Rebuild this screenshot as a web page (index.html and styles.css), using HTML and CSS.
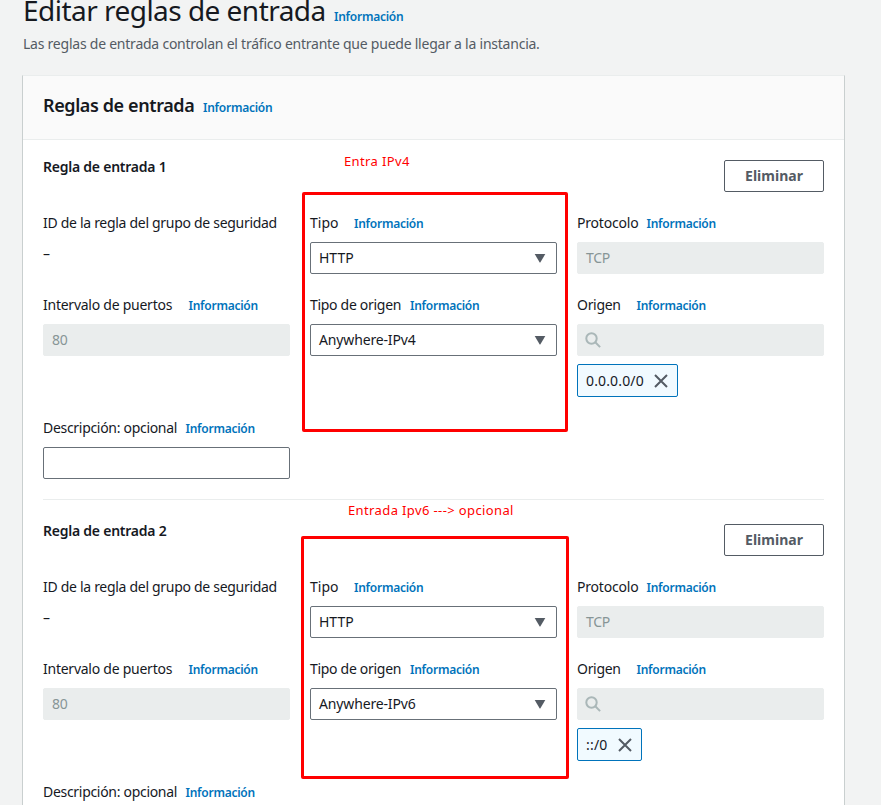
FILE: index.html
```html
<!DOCTYPE html>
<html lang="es">
<head>
<meta charset="utf-8">
<title>Editar reglas de entrada</title>
<link rel="stylesheet" href="styles.css">
</head>
<body>
<header class="page-header">
  <h1><span class="page-title">Editar reglas de entrada</span><a class="info">Información</a></h1>
  <p>Las reglas de entrada controlan el tráfico entrante que puede llegar a la instancia.</p>
</header>
<main class="panel">
  <div class="panel-header"><h2>Reglas de entrada</h2><a class="info">Información</a></div>
  <section class="rule">
    <div class="rule-header"><h3>Regla de entrada 1</h3><button class="remove">Eliminar</button></div>
    <div class="fields">
      <div class="field"><div class="label"><span class="t-id">ID de la regla del grupo de seguridad</span></div><div class="value">–</div></div>
      <div class="field"><div class="label"><span class="t-type">Tipo</span><a class="info">Información</a></div><div class="control select"><span class="t-http">HTTP</span><svg class="caret" viewBox="0 0 12 9"><path d="M.7 0h10.6L6.3 8.6h-.6z"/></svg></div></div>
      <div class="field"><div class="label"><span class="t-protocol">Protocolo</span><a class="info">Información</a></div><div class="control disabled"><span class="t-tcp">TCP</span></div></div>
      <div class="field"><div class="label"><span class="t-range">Intervalo de puertos</span><a class="info">Información</a></div><div class="control disabled">80</div></div>
      <div class="field"><div class="label"><span class="t-source-type">Tipo de origen</span><a class="info">Información</a></div><div class="control select"><span class="t-any">Anywhere-IPv4</span><svg class="caret" viewBox="0 0 12 9"><path d="M.7 0h10.6L6.3 8.6h-.6z"/></svg></div></div>
      <div class="field"><div class="label"><span class="t-source">Origen</span><a class="info">Información</a></div><div class="control disabled"><svg class="search" viewBox="0 0 16 16"><circle cx="6.5" cy="6.5" r="5.2"/><path d="M10.3 10.3l4.8 4.8"/></svg></div><div class="token"><span class="t-cidr4">0.0.0.0/0</span><svg class="close" viewBox="0 0 14 14"><path d="M1 1l12 12M13 1L1 13"/></svg></div></div>
      <div class="field"><div class="label"><span class="t-desc">Descripción: opcional</span><a class="info">Información</a></div><div class="control"></div></div>
    </div>
    <div class="note note-v4">Entra IPv4</div>
    <div class="mark mark-v4"></div>
  </section>
  <section class="rule">
    <div class="rule-header"><h3>Regla de entrada 2</h3><button class="remove">Eliminar</button></div>
    <div class="fields">
      <div class="field"><div class="label"><span class="t-id">ID de la regla del grupo de seguridad</span></div><div class="value">–</div></div>
      <div class="field"><div class="label"><span class="t-type">Tipo</span><a class="info">Información</a></div><div class="control select"><span class="t-http">HTTP</span><svg class="caret" viewBox="0 0 12 9"><path d="M.7 0h10.6L6.3 8.6h-.6z"/></svg></div></div>
      <div class="field"><div class="label"><span class="t-protocol">Protocolo</span><a class="info">Información</a></div><div class="control disabled"><span class="t-tcp">TCP</span></div></div>
      <div class="field"><div class="label"><span class="t-range">Intervalo de puertos</span><a class="info">Información</a></div><div class="control disabled">80</div></div>
      <div class="field"><div class="label"><span class="t-source-type">Tipo de origen</span><a class="info">Información</a></div><div class="control select"><span class="t-any">Anywhere-IPv6</span><svg class="caret" viewBox="0 0 12 9"><path d="M.7 0h10.6L6.3 8.6h-.6z"/></svg></div></div>
      <div class="field"><div class="label"><span class="t-source">Origen</span><a class="info">Información</a></div><div class="control disabled"><svg class="search" viewBox="0 0 16 16"><circle cx="6.5" cy="6.5" r="5.2"/><path d="M10.3 10.3l4.8 4.8"/></svg></div><div class="token"><span class="t-cidr6">::/0</span><svg class="close" viewBox="0 0 14 14"><path d="M1 1l12 12M13 1L1 13"/></svg></div></div>
      <div class="field"><div class="label"><span class="t-desc">Descripción: opcional</span><a class="info">Información</a></div></div>
    </div>
    <div class="note note-v6">Entrada Ipv6 ---&gt; opcional</div>
    <div class="mark mark-v6"></div>
  </section>
</main>
</body>
</html>
```
FILE: styles.css
```css
* { box-sizing: border-box; }
html { height: 805px; overflow: hidden; }
body {
  margin: 0;
  height: 805px;
  overflow: hidden;
  background: #f2f3f3;
  color: #16191f;
  font: 14px/22px "Noto Sans", "Open Sans", sans-serif;
  letter-spacing: -0.3px;
  white-space: nowrap;
}
h1, h2, h3, p { margin: 0; }
.page-header { display: flow-root; height: 75px; padding: 0 23px; }
h1 { display: flex; align-items: baseline; height: 33px; font-size: 28px; line-height: 32px; font-weight: 400; margin-top: -6px; }
.page-title { width: 311px; letter-spacing: -0.53px; }
.page-header p { margin-top: 6px; color: #545b64; letter-spacing: -0.235px; }
.info { color: #0073bb; font-size: 12px; font-weight: 600; line-height: 22px; letter-spacing: -0.25px; }
.panel {
  width: 823px;
  height: 730px;
  margin-left: 22px;
  background: #fff;
  border: 1px solid #c9cfcf;
  border-top-color: #eaeded;
  border-bottom: 0;
}
.panel-header {
  display: flex;
  align-items: baseline;
  height: 64px;
  padding: 18px 20px 0;
  background: #fafafa;
  border-bottom: 1px solid #eaeded;
}
h2 { width: 160px; font-size: 18px; line-height: 22px; font-weight: 600; letter-spacing: -0.4px; }
.rule { position: relative; margin: 0 20px; padding-top: 20px; height: 360px; border-bottom: 1px solid #eaeded; }
.rule + .rule { padding-top: 24px; height: 305px; border: 0; }
.rule-header { display: flex; justify-content: space-between; height: 52px; }
h3 { margin-top: -4px; font-size: 14px; line-height: 22px; font-weight: 600; letter-spacing: -0.24px; }
.remove {
  width: 100px;
  height: 32px;
  padding: 0;
  border: 1px solid #545b64;
  border-radius: 2px;
  background: #fff;
  color: #545b64;
  font: 700 14px/20px "Noto Sans", sans-serif;
}
.fields { display: grid; grid-template-columns: repeat(3, 247px); grid-template-rows: 82px 123px auto; column-gap: 20px; }
.label { display: flex; align-items: baseline; height: 30px; }
.value { height: 24px; line-height: 24px; }
.control {
  display: flex;
  align-items: center;
  justify-content: space-between;
  height: 32px;
  padding: 0 8px;
  border: 1px solid #687078;
  border-radius: 2px;
}
.disabled { background: #eaeded; border-color: #eaeded; color: #879596; }
.caret { width: 12px; height: 9px; margin-right: 2px; fill: #545b64; }
.search { width: 16px; height: 16px; margin-left: -1px; fill: none; stroke: #aab7b8; stroke-width: 2; }
.token {
  display: inline-flex;
  align-items: center;
  height: 33px;
  margin-top: 8px;
  padding: 0 9px 0 8px;
  background: #f1faff;
  border: 1px solid #0073bb;
  border-radius: 2px;
}
.close { width: 14px; height: 14px; fill: none; stroke: #545b64; stroke-width: 2; }
.t-type { width: 44px; letter-spacing: 0; }
.t-protocol { width: 69.5px; letter-spacing: -0.2px; }
.t-range { width: 145.5px; letter-spacing: -0.25px; }
.t-source-type { width: 100px; }
.t-source { width: 59.5px; }
.t-desc { width: 142.5px; }
.t-http { letter-spacing: 0; }
.t-any { letter-spacing: -0.15px; }
.t-cidr4 { width: 68px; letter-spacing: 0.15px; }
.t-cidr6 { width: 32px; letter-spacing: 0.2px; }
.note { position: absolute; color: #f00; font-size: 13px; line-height: 18px; letter-spacing: 0.38px; }
.note-v4 { left: 301px; top: 12px; }
.note-v6 { left: 305px; top: 1px; }
.mark { position: absolute; border: 3px solid #f00; border-radius: 2px; }
.mark-v4 { left: 259px; top: 52px; width: 266px; height: 240px; }
.mark-v6 { left: 258px; top: 36px; width: 268px; height: 243px; }
```
